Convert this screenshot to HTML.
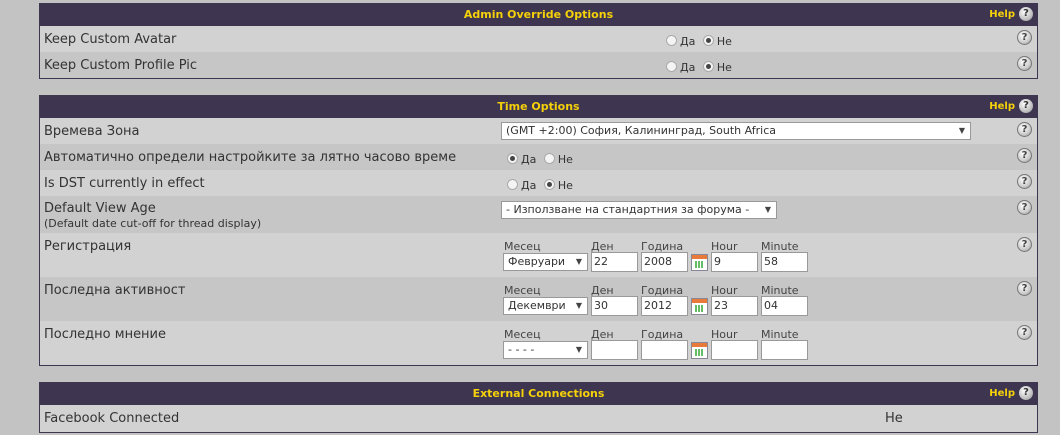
<!DOCTYPE html>
<html><head><meta charset="utf-8"><style>
*{margin:0;padding:0;box-sizing:border-box}
body{width:1060px;height:435px;background:#c3c3c3;font-family:"DejaVu Sans","Liberation Sans",sans-serif;color:#333;position:relative;overflow:hidden}
.t{position:absolute;left:39px;width:999px;border:1px solid #3e3550;border-top:none}
.h{height:23px;background:#3e3550;color:#f5d10a;font-weight:bold;font-size:11px;text-align:center;line-height:23px;position:relative}
.h .hp{position:absolute;right:4px;top:0;font-size:10px}
.r{position:relative;font-size:13px}
.a{background:#d2d2d2}.b{background:#c6c6c6}
.l{position:absolute;left:4px;top:6px}
.q{position:absolute;right:5px;width:15px;height:15px;border-radius:50%;background:radial-gradient(circle at 40% 35%,#fff,#ccc 60%,#888);border:1px solid #777;font-size:10px;font-weight:bold;color:#444;text-align:center;line-height:13px}
.hq{display:inline-block;width:14px;height:14px;border-radius:50%;background:radial-gradient(circle at 40% 35%,#fff,#bbb 65%,#888);color:#333;font-size:10px;line-height:14px;text-align:center;vertical-align:middle;margin-left:4px}
.rad{position:absolute;font-size:11px}
.rd{display:inline-block;width:11px;height:11px;border-radius:50%;border:1px solid #aaa;background:#f4f4f4;vertical-align:-1px;margin-right:3px;position:relative}
.rd.on::after{content:"";position:absolute;left:2px;top:2px;width:5px;height:5px;border-radius:50%;background:#444}
.sel{position:absolute;background:#fff;border:1px solid #999;font-size:11px;height:18px;line-height:16px;padding-left:4px}
.sel::after{content:"▼";position:absolute;right:5px;top:0;font-size:8px;color:#444}
.in{position:absolute;background:#fff;border:1px solid #999;height:20px;width:47px;font-size:11px;line-height:18px;padding-left:2px}
.lb{position:absolute;font-size:11px;color:#444}
.cal{position:absolute;width:17px;height:17px;border:1px solid #889;background:linear-gradient(#e87a3a 0 4px,#fff 4px);}
.cal::after{content:"";position:absolute;left:3px;top:6px;width:9px;height:7px;background:repeating-linear-gradient(90deg,#6b6 0 2px,transparent 2px 3px)}
</style></head><body>

<div class="t" style="top:3px;height:76px">
 <div class="h">Admin Override Options<span class="hp">Help<span class="hq">?</span></span></div>
 <div class="r a" style="height:26px"><span class="l">Keep Custom Avatar</span>
  <span class="rad" style="left:626px;top:9px"><span class="rd"></span>Да <span class="rd on" style="margin-left:4px"></span>Не</span><span class="q" style="top:4px">?</span></div>
 <div class="r b" style="height:26px"><span class="l">Keep Custom Profile Pic</span>
  <span class="rad" style="left:626px;top:9px"><span class="rd"></span>Да <span class="rd on" style="margin-left:4px"></span>Не</span><span class="q" style="top:4px">?</span></div>
</div>

<div class="t" style="top:95px;height:271px">
 <div class="h">Time Options<span class="hp">Help<span class="hq">?</span></span></div>
 <div class="r a" style="height:26px"><span class="l">Времева Зона</span>
  <span class="sel" style="left:461px;top:4px;width:470px">(GMT +2:00) София, Калининград, South Africa</span><span class="q" style="top:4px">?</span></div>
 <div class="r b" style="height:26px"><span class="l">Автоматично определи настройките за лятно часово време</span>
  <span class="rad" style="left:467px;top:9px"><span class="rd on"></span>Да <span class="rd" style="margin-left:4px"></span>Не</span><span class="q" style="top:4px">?</span></div>
 <div class="r a" style="height:26px"><span class="l">Is DST currently in effect</span>
  <span class="rad" style="left:467px;top:9px"><span class="rd"></span>Да <span class="rd on" style="margin-left:4px"></span>Не</span><span class="q" style="top:4px">?</span></div>
 <div class="r b" style="height:37px"><span class="l" style="top:5px">Default View Age<br><span style="font-size:11px">(Default date cut-off for thread display)</span></span>
  <span class="sel" style="left:461px;top:5px;width:276px">- Използване на стандартния за форума -</span><span class="q" style="top:4px">?</span></div>
 <div class="r a" style="height:44px"><span class="l">Регистрация</span>
  <span class="lb" style="left:464px;top:7px">Месец</span><span class="lb" style="left:551px;top:7px">Ден</span><span class="lb" style="left:601px;top:7px">Година</span><span class="lb" style="left:671px;top:7px">Hour</span><span class="lb" style="left:721px;top:7px">Minute</span>
  <span class="sel" style="left:463px;top:20px;width:85px">Февруари</span><span class="in" style="left:551px;top:19px">22</span><span class="in" style="left:601px;top:19px">2008</span><span class="cal" style="left:651px;top:21px"></span><span class="in" style="left:671px;top:19px">9</span><span class="in" style="left:721px;top:19px">58</span>
  <span class="q" style="top:4px">?</span></div>
 <div class="r b" style="height:44px"><span class="l">Последна активност</span>
  <span class="lb" style="left:464px;top:7px">Месец</span><span class="lb" style="left:551px;top:7px">Ден</span><span class="lb" style="left:601px;top:7px">Година</span><span class="lb" style="left:671px;top:7px">Hour</span><span class="lb" style="left:721px;top:7px">Minute</span>
  <span class="sel" style="left:463px;top:20px;width:85px">Декември</span><span class="in" style="left:551px;top:19px">30</span><span class="in" style="left:601px;top:19px">2012</span><span class="cal" style="left:651px;top:21px"></span><span class="in" style="left:671px;top:19px">23</span><span class="in" style="left:721px;top:19px">04</span>
  <span class="q" style="top:4px">?</span></div>
 <div class="r a" style="height:44px"><span class="l">Последно мнение</span>
  <span class="lb" style="left:464px;top:7px">Месец</span><span class="lb" style="left:551px;top:7px">Ден</span><span class="lb" style="left:601px;top:7px">Година</span><span class="lb" style="left:671px;top:7px">Hour</span><span class="lb" style="left:721px;top:7px">Minute</span>
  <span class="sel" style="left:463px;top:20px;width:85px">- - - -</span><span class="in" style="left:551px;top:19px"></span><span class="in" style="left:601px;top:19px"></span><span class="cal" style="left:651px;top:21px"></span><span class="in" style="left:671px;top:19px"></span><span class="in" style="left:721px;top:19px"></span>
  <span class="q" style="top:4px">?</span></div>
</div>

<div class="t" style="top:382px;height:51px">
 <div class="h">External Connections<span class="hp">Help<span class="hq">?</span></span></div>
 <div class="r a" style="height:27px"><span class="l">Facebook Connected</span><span style="position:absolute;left:845px;top:6px">Не</span></div>
</div>
</body></html>
